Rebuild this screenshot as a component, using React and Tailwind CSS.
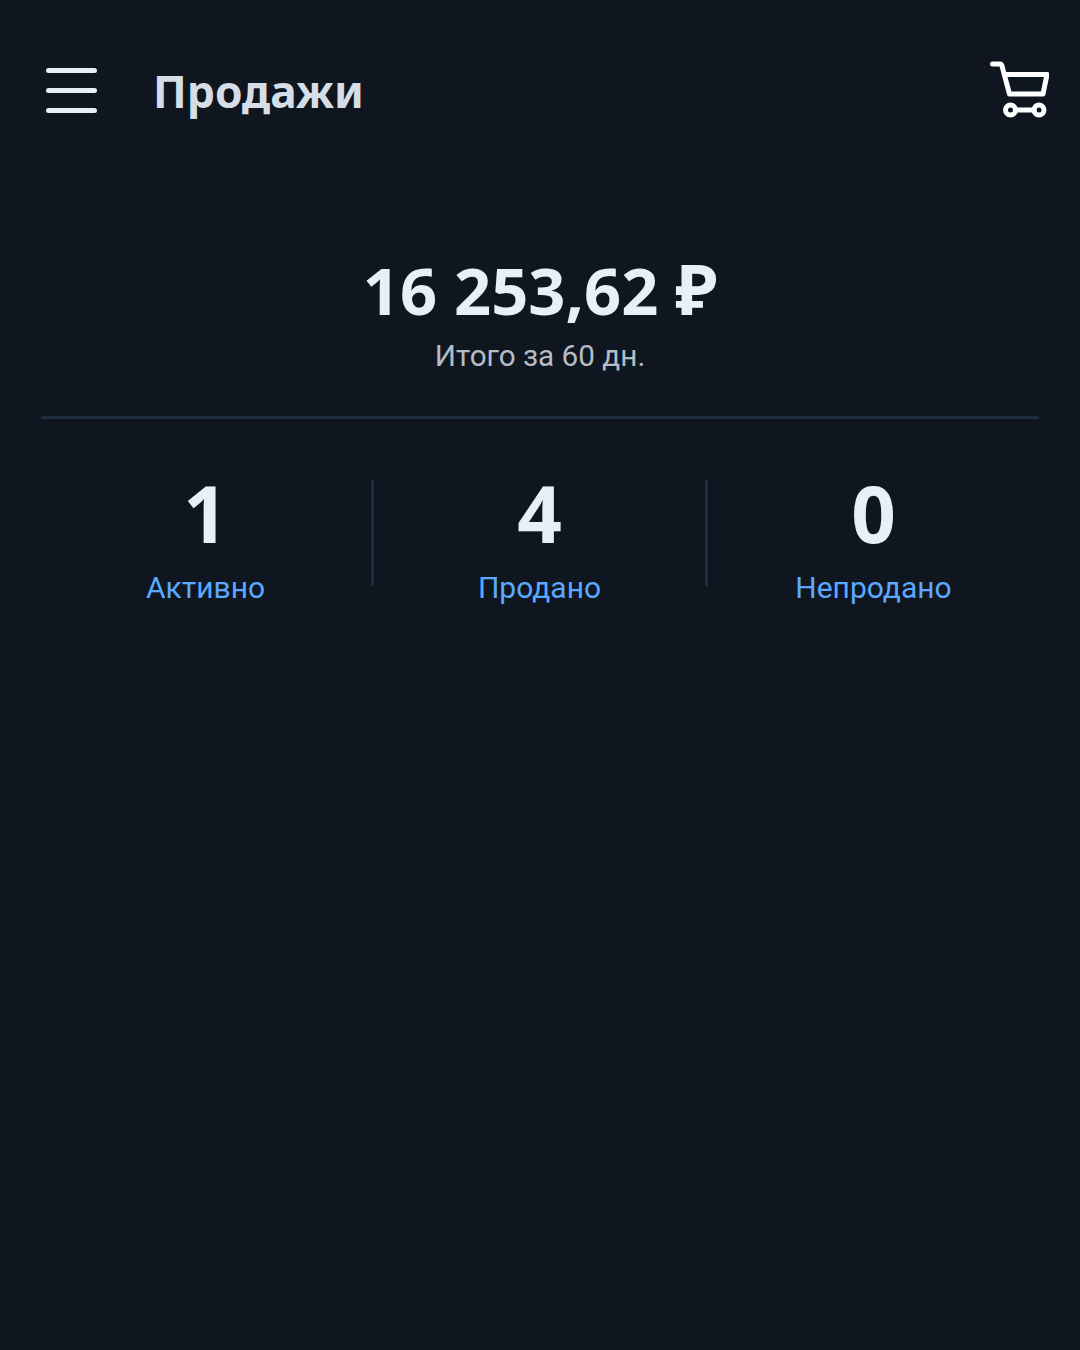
import React from "react";

const stats = [
  { value: "1", label: "Активно" },
  { value: "4", label: "Продано" },
  { value: "0", label: "Непродано" },
];

function CartIcon() {
  return (
    <svg className="-mt-[4px]" width="60" height="60" viewBox="0 0 60 60" fill="none" stroke="#ffffff" strokeWidth="5" strokeLinecap="round" strokeLinejoin="round">
      <path d="M3.5 5 H11 Q12.5 5 13 7 L20.5 35 H54 L58 15.5 H15.5" />
      <circle cx="21.5" cy="51" r="5" />
      <circle cx="50" cy="51" r="5" />
      <path d="M26.5 51 H45" />
    </svg>
  );
}

export default function App() {
  return (
    <div className="min-h-[1350px] w-full bg-[#0f1620] font-['Roboto',sans-serif]">
      {/* header */}
      <header className="flex h-[182px] items-center justify-between pl-[46px] pr-[31px]">
        <div className="flex items-center gap-[56px]">
          <button className="-mt-[1px] flex w-[51px] flex-col gap-[15px]">
            <span className="h-[5px] rounded-full bg-[#e8eff6]" />
            <span className="h-[5px] rounded-full bg-[#e8eff6]" />
            <span className="h-[5px] rounded-full bg-[#e8eff6]" />
          </button>
          <h1 className="font-['Noto_Sans',sans-serif] text-[44.3px] font-bold leading-none text-[#d5dde6]">
            Продажи
          </h1>
        </div>
        <CartIcon />
      </header>

      {/* total */}
      <section className="mt-[67px] flex flex-col items-center">
        <div className="font-['Noto_Sans',sans-serif] text-[65px] font-bold leading-[82px] text-[#e8eff6]">
          16 253,62 <span className="text-[70px] leading-none">₽</span>
        </div>
        <div className="mt-[8px] text-[29.7px] leading-[34px] text-[#b4bcc5]">
          Итого за 60 дн.
        </div>
      </section>

      <div className="mx-[41px] mt-[43px] h-[3px] bg-[#1f2d40]" />

      {/* stats */}
      <section className="ml-[40px] mr-[41px] mt-[61px] flex items-start">
        {stats.map((s, i) => (
          <React.Fragment key={s.label}>
            {i > 0 && <div className="h-[106px] w-[3px] bg-[#1f2d40]" />}
            <div className="flex flex-1 flex-col items-center">
              <div className="-mt-[2px] font-['Noto_Sans',sans-serif] text-[78px] font-bold leading-[70px] text-[#e8eff6]">
                {s.value}
              </div>
              <div className="mt-[22px] text-[30px] leading-[36px] text-[#5aa9ff]">
                {s.label}
              </div>
            </div>
          </React.Fragment>
        ))}
      </section>
    </div>
  );
}
